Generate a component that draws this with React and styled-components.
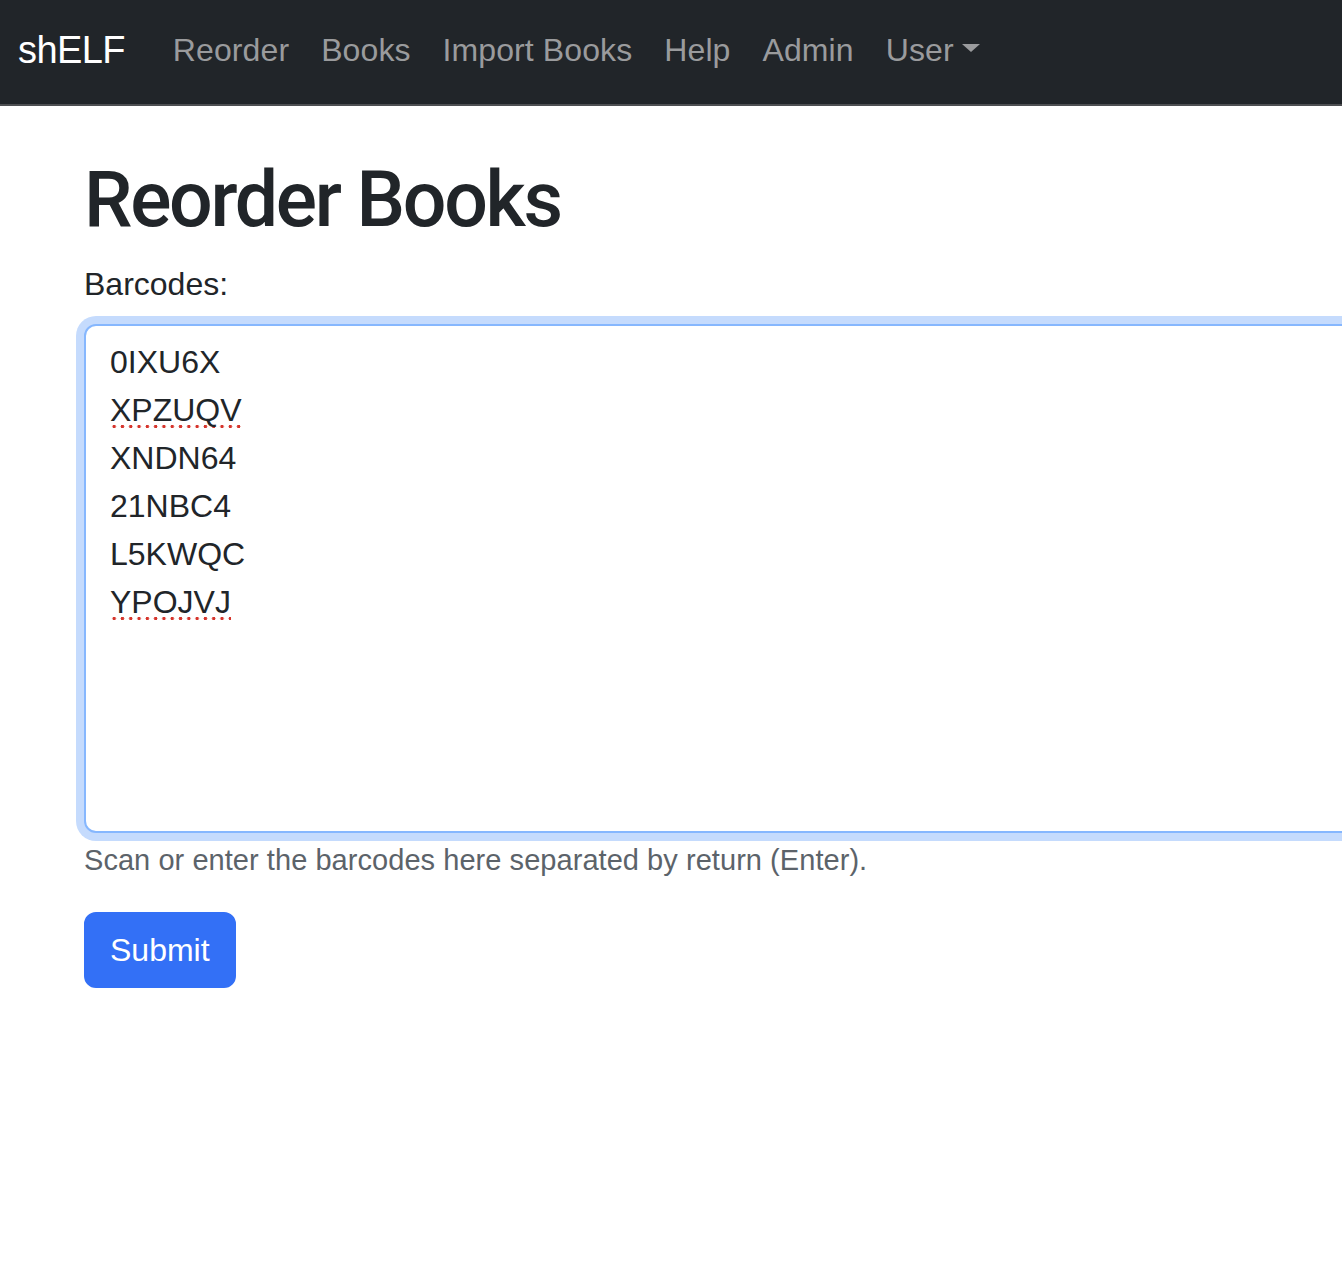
import styled, { createGlobalStyle } from "styled-components";

const GlobalStyle = createGlobalStyle`
  html, body {
    margin: 0;
    padding: 0;
    background: #fff;
  }
  body {
    font-family: "Liberation Sans", Arial, sans-serif;
    color: #212529;
    overflow-x: hidden;
  }
  * { box-sizing: border-box; }
`;

const Page = styled.div`
  width: 1342px;
  min-height: 1288px;
  overflow: hidden;
`;

const Navbar = styled.nav`
  height: 106px;
  background: #212529;
  border-bottom: 2px solid #4d4f52;
  display: flex;
  align-items: center;
  padding: 0 0 4px 18px;
`;

const Brand = styled.a`
  font-size: 38px;
  color: #fff;
  margin-right: 32px;
  letter-spacing: -0.6px;
  text-decoration: none;
`;

const NavList = styled.ul`
  display: flex;
  list-style: none;
  margin: 0;
  padding: 0;
`;

const NavLink = styled.a`
  display: flex;
  align-items: center;
  padding: 0 16px;
  font-size: 32px;
  line-height: 48px;
  letter-spacing: 0.1px;
  color: #9a9b9d;
  text-decoration: none;
`;

const Caret = styled.span`
  display: inline-block;
  margin-left: 8px;
  border-top: 8px solid #9a9b9d;
  border-left: 9px solid transparent;
  border-right: 9px solid transparent;
  transform: translateY(-2px);
`;

const Main = styled.main`
  padding: 46px 0 0 84px;
`;

const Title = styled.h1`
  margin: 0 0 12px;
  font-family: Roboto, "Liberation Sans", sans-serif;
  font-weight: 500;
  font-size: 77px;
  line-height: 96px;
  letter-spacing: -2.3px;
  color: #212529;
`;

const Label = styled.label`
  display: block;
  margin-bottom: 16px;
  font-size: 32px;
  line-height: 48px;
`;

const Field = styled.div`
  width: 1400px;
  height: 509px;
  padding: 12px 24px;
  font-size: 32px;
  line-height: 48px;
  color: #212529;
  background: #fff;
  border: 2px solid #86b7fe;
  border-radius: 12px;
  box-shadow: 0 0 0 8px #c5dbfd;
  white-space: pre;
`;

const Line = styled.div``;

const Misspelled = styled.span`
  background-image: radial-gradient(circle, #d6352c 1.6px, transparent 2px);
  background-size: 8.3px 5px;
  background-repeat: repeat-x;
  background-position: 0 100%;
  padding-bottom: 1px;
`;

const Help = styled.div`
  margin-top: 8px;
  font-size: 29px;
  line-height: 38px;
  letter-spacing: 0.05px;
  color: #5c636a;
`;

const SubmitButton = styled.button`
  margin-top: 33px;
  padding: 12px 24px;
  font-family: inherit;
  font-size: 32px;
  line-height: 48px;
  color: #fff;
  background: #3370f6;
  border: 2px solid #3370f6;
  border-radius: 12px;
`;

const barcodes = [
  { code: "0IXU6X" },
  { code: "XPZUQV", flagged: true },
  { code: "XNDN64" },
  { code: "21NBC4" },
  { code: "L5KWQC" },
  { code: "YPOJVJ", flagged: true },
];

const links = ["Reorder", "Books", "Import Books", "Help", "Admin"];

export default function App() {
  return (
    <Page>
      <GlobalStyle />
      <Navbar>
        <Brand href="#">shELF</Brand>
        <NavList>
          {links.map((l) => (
            <li key={l}>
              <NavLink href="#">{l}</NavLink>
            </li>
          ))}
          <li>
            <NavLink href="#">
              User
              <Caret />
            </NavLink>
          </li>
        </NavList>
      </Navbar>
      <Main>
        <Title>Reorder Books</Title>
        <form onSubmit={(e) => e.preventDefault()}>
          <Label>Barcodes:</Label>
          <Field role="textbox" aria-multiline="true">
            {barcodes.map(({ code, flagged }) => (
              <Line key={code}>
                {flagged ? <Misspelled>{code}</Misspelled> : code}
              </Line>
            ))}
          </Field>
          <Help>Scan or enter the barcodes here separated by return (Enter).</Help>
          <SubmitButton type="submit">Submit</SubmitButton>
        </form>
      </Main>
    </Page>
  );
}
